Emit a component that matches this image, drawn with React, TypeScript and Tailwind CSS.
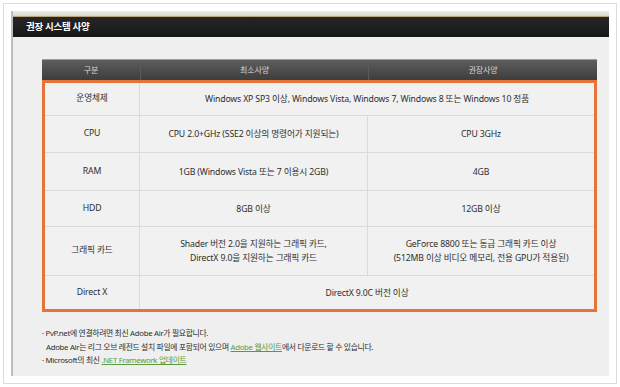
const rows: { label: string; min: string[]; rec?: string[]; h: string }[] = [
  { label: "운영체제", min: ["Windows XP SP3 이상, Windows Vista, Windows 7, Windows 8 또는 Windows 10 정품"], h: "h-[33px]" },
  { label: "CPU", min: ["CPU 2.0+GHz (SSE2 이상의 명령어가 지원되는)"], rec: ["CPU 3GHz"], h: "h-[37px]" },
  { label: "RAM", min: ["1GB (Windows Vista 또는 7 이용시 2GB)"], rec: ["4GB"], h: "h-[38px]" },
  { label: "HDD", min: ["8GB 이상"], rec: ["12GB 이상"], h: "h-[36px]" },
  {
    label: "그래픽 카드",
    min: ["Shader 버전 2.0을 지원하는 그래픽 카드,", "DirectX 9.0을 지원하는 그래픽 카드"],
    rec: ["GeForce 8800 또는 동급 그래픽 카드 이상", "(512MB 이상 비디오 메모리, 전용 GPU가 적용된)"],
    h: "h-[49px]",
  },
  { label: "Direct X", min: ["DirectX 9.0C 버전 이상"], h: "h-[33px]" },
];

function Lines({ lines }: { lines: string[] }) {
  return (
    <div className="flex flex-col items-center leading-[14px]">
      {lines.map((l) => (
        <span key={l}>{l}</span>
      ))}
    </div>
  );
}

export default function App() {
  return (
    <div className="w-[620px] h-[387px] bg-white p-[3px] font-['Noto_Sans','Noto_Sans_CJK_KR',sans-serif] text-[8.7px] tracking-[-0.15px] text-[#2e2e2e]">
      <div className="h-full border border-[#dcdcdc] p-[7px]">
        <div className="h-full flex flex-col bg-[#efefef] border-l-2 border-[#bcbcbc]">
          <div className="h-[6px] bg-gradient-to-b from-[#ececec] to-[#dcd6c4] border-b border-[#b9a57a]" />
          <div className="h-[20px] bg-gradient-to-b from-[#262626] to-[#171717] flex items-center pl-[13px]">
            <span className="text-white font-bold text-[9.5px] tracking-[-0.3px]">권장 시스템 사양</span>
          </div>

          <div className="ml-[29px] mr-[12px] mt-[22px]">
            <div className="h-[21px] grid grid-cols-[98px_228px_1fr] bg-gradient-to-b from-[#5e5e5e] to-[#3d3d3d] border-t border-[#9c9c9c] text-[#d6d6d6] text-[8px]">
              <div className="flex items-center justify-center">구분</div>
              <div className="flex items-center justify-center border-l border-[#5a5a5a]">최소사양</div>
              <div className="flex items-center justify-center border-l border-[#5a5a5a]">권장사양</div>
            </div>
            <div className="border-[3px] border-[#e8733a] bg-[#f1f1f1]">
              {rows.map((r, i) => (
                <div
                  key={r.label}
                  className={`grid grid-cols-[95px_228px_1fr] ${r.h} ${i < rows.length - 1 ? "border-b border-[#dadada]" : ""}`}
                >
                  <div className="flex items-center justify-center border-r border-[#dadada]">{r.label}</div>
                  {r.rec ? (
                    <>
                      <div className="flex items-center justify-center border-r border-[#dadada]">
                        <Lines lines={r.min} />
                      </div>
                      <div className="flex items-center justify-center">
                        <Lines lines={r.rec} />
                      </div>
                    </>
                  ) : (
                    <div className="col-span-2 flex items-center justify-center">
                      <Lines lines={r.min} />
                    </div>
                  )}
                </div>
              ))}
            </div>

            <div className="mt-[15px] leading-[13.5px] text-[7.8px] tracking-[-0.3px]">
              <p>· PvP.net에 연결하려면 최신 Adobe Air가 필요합니다.</p>
              <p className="pl-[4px]">
                Adobe Air는 리그 오브 레전드 설치 파일에 포함되어 있으며{" "}
                <a className="text-[#5b9b3b] underline">Adobe 웹사이트</a>에서 다운로드 할 수 있습니다.
              </p>
              <p>
                · Microsoft의 최신 <a className="text-[#5b9b3b] underline">.NET Framework 업데이트</a>
              </p>
            </div>
          </div>
        </div>
      </div>
    </div>
  );
}
